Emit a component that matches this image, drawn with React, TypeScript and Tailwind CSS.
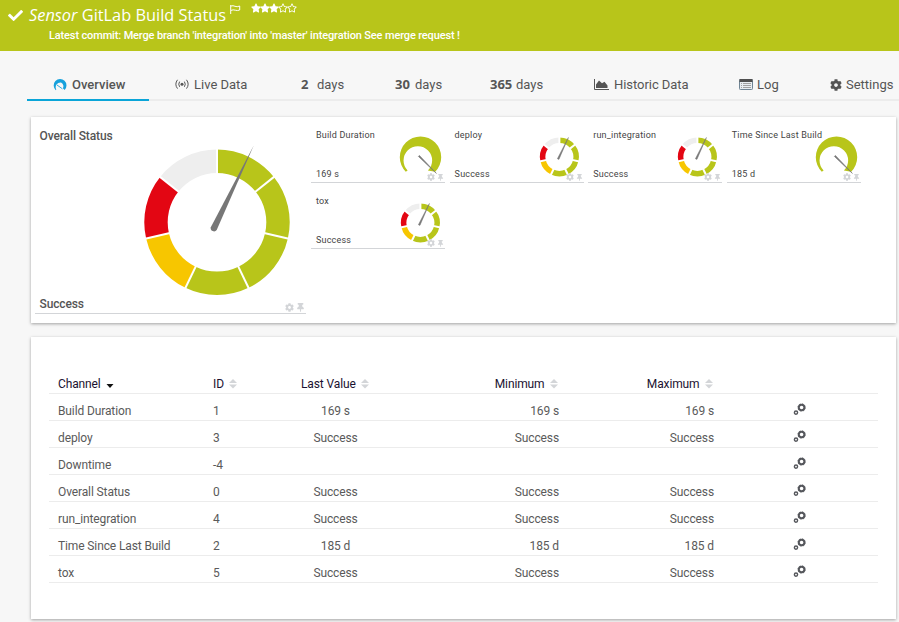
import React from 'react';
import clsx from 'clsx';
import { FaCheck, FaCog, FaRegStar, FaStar, FaThumbtack } from 'react-icons/fa';

type Channel = {
  name: string;
  id: string;
  last: string;
  min: string;
  max: string;
};

const channels: Channel[] = [
  { name: 'Build Duration', id: '1', last: '169 s', min: '169 s', max: '169 s' },
  { name: 'deploy', id: '3', last: 'Success', min: 'Success', max: 'Success' },
  { name: 'Downtime', id: '-4', last: '', min: '', max: '' },
  { name: 'Overall Status', id: '0', last: 'Success', min: 'Success', max: 'Success' },
  { name: 'run_integration', id: '4', last: 'Success', min: 'Success', max: 'Success' },
  { name: 'Time Since Last Build', id: '2', last: '185 d', min: '185 d', max: '185 d' },
  { name: 'tox', id: '5', last: 'Success', min: 'Success', max: 'Success' },
];

const gauges = [
  { name: 'Build Duration', value: '169 s', kind: 'dial' },
  { name: 'deploy', value: 'Success', kind: 'ring' },
  { name: 'run_integration', value: 'Success', kind: 'ring' },
  { name: 'Time Since Last Build', value: '185 d', kind: 'dial' },
  { name: 'tox', value: 'Success', kind: 'ring' },
];

const GREEN = '#b8c51a';
const SEGMENTS = [GREEN, GREEN, GREEN, GREEN, '#f7c600', '#e30613', '#eeeeee'];

const point = (r: number, deg: number) => {
  const a = ((deg - 90) * Math.PI) / 180;
  return `${(r * Math.cos(a)).toFixed(2)} ${(r * Math.sin(a)).toFixed(2)}`;
};

const Ring = ({ outer, inner, gap }: { outer: number; inner: number; gap: number }) => {
  const step = 360 / SEGMENTS.length;
  return (
    <g>
      {SEGMENTS.map((color, i) => {
        const a = i * step;
        const b = a + step;
        return (
          <path
            key={i}
            fill={color}
            d={`M${point(outer, a)}A${outer} ${outer} 0 0 1 ${point(outer, b)}L${point(inner, b)}A${inner} ${inner} 0 0 0 ${point(inner, a)}Z`}
          />
        );
      })}
      {SEGMENTS.map((_, i) => (
        <path key={i} d={`M${point(inner - 1, i * step)}L${point(outer + 1, i * step)}`} stroke="#fff" strokeWidth={gap} />
      ))}
    </g>
  );
};

const BigGauge = () => (
  <svg width="150" height="156" viewBox="-75 -80.3 150 156">
    <Ring outer={72.7} inner={49.3} gap={2} />
    <path d="M36.6 -76.6L-0.3 7.7A3.3 3.3 0 0 1 -6.2 5Z" fill="#777" />
  </svg>
);

const SmallRing = () => (
  <svg width="44" height="44" viewBox="-21.4 -22 44 44">
    <Ring outer={19.5} inner={14} gap={2} />
    <path d="M9 -19.5L-0.5 2.4L-2 1.7Z" fill="#777" stroke="#777" strokeWidth="0.5" />
  </svg>
);

const SmallDial = () => (
  <svg width="44" height="44" viewBox="-21.6 -22.2 44 44">
    <path d="M-14.8 14.6A20.7 20.7 0 1 1 14.6 14.6L7.3 13.4A14.3 14.3 0 1 0 -13 13.2Z" fill={GREEN} />
    <path d="M15.8 16.2L-2.2 -0.8L-1.2 -1.8Z" fill="#777" stroke="#777" strokeWidth="0.6" />
  </svg>
);

const Tools = ({ big }: { big?: boolean }) => (
  <div className="flex items-center gap-[2px] text-[#d3d5d8]">
    <FaCog size={big ? 9 : 8} />
    <FaThumbtack size={big ? 9 : 7} />
  </div>
);

const Sort = () => (
  <svg width="8" height="10" viewBox="0 0 8 10" className="ml-[5px] shrink-0">
    <path d="M4 0L8 4H0Z M0 5.5H8L4 9.5Z" fill="#d3d5d8" />
  </svg>
);

const Gears = () => (
  <svg width="14" height="13" viewBox="0 0 14 13" fill="none" stroke="#55575c">
    <circle cx="8.6" cy="4.5" r="2.8" strokeWidth="2" />
    <circle cx="8.6" cy="4.5" r="3.7" strokeWidth="0.8" strokeDasharray="1.4 1.5" />
    <circle cx="3" cy="9.6" r="1.6" strokeWidth="1.4" />
  </svg>
);

const GaugeIcon = () => (
  <svg width="14" height="12" viewBox="0 0 14 12">
    <path d="M2.8 11.2A6.4 6.4 0 1 1 11.6 11L9.9 9.2A4.2 4.2 0 0 0 8 3.4A4.9 4.9 0 0 0 3.3 10.6Z" fill="#16a1dc" />
    <path d="M4 6L9.4 9.8" stroke="#16a1dc" strokeWidth="0.9" />
  </svg>
);

const LiveIcon = () => (
  <svg width="14" height="11" viewBox="0 0 14 11" fill="none" stroke="#555" strokeWidth="1">
    <circle cx="7" cy="5.2" r="1.5" fill="#555" stroke="none" />
    <path d="M4.6 2.6Q2.9 5.2 4.6 7.8M9.4 2.6Q11.1 5.2 9.4 7.8M2.5 0.8Q-0.8 5.2 2.5 9.6M11.5 0.8Q14.8 5.2 11.5 9.6" />
  </svg>
);

const ChartIcon = () => (
  <svg width="15" height="11" viewBox="0 0 15 11">
    <path d="M0.5 0V10.5H15" fill="none" stroke="#555" />
    <path d="M2 9V5.5L5 1.5L8 4.3L10.5 2.7L13.5 6.5V9Z" fill="#555" />
  </svg>
);

const LogIcon = () => (
  <svg width="14" height="11" viewBox="0 0 14 11">
    <rect x="0.5" y="0.5" width="13" height="10" rx="0.8" fill="#e8edf1" stroke="#6f8494" />
    <path d="M0.5 0H13.5V3H0.5Z" fill="#505050" />
    <path d="M2 4.5H3M4 4.5H12M2 6.5H3M4 6.5H12M2 8.5H3M4 8.5H12" stroke="#999" strokeWidth="0.9" />
  </svg>
);

const Header = () => (
  <header className="h-[51px] bg-[#b8c51a] text-white">
    <div className="flex h-[29px] items-start pl-[8px]">
      <FaCheck className="mt-[8px]" size={15} />
      <h1 className="ml-[6px] mt-[4px] font-['Open_Sans'] text-[16.35px] leading-[22px] whitespace-nowrap">
        <em>Sensor</em> GitLab Build Status
      </h1>
      <svg className="ml-[4px] mt-[5px]" width="11" height="9" viewBox="0 0 11 9" fill="none" stroke="#fff" strokeWidth="1">
        <path d="M0.7 0V9M1 1Q3 0.3 5 1.3T9.7 1V5Q7.5 6 5.3 5.2T1 5.4" />
      </svg>
      <div className="ml-[10px] mt-[3px] flex">
        {[0, 1, 2, 3, 4].map((i) => (
          <span key={i} className="w-[9px]">
            {i < 3 ? <FaStar size={10} /> : <FaRegStar size={10} />}
          </span>
        ))}
      </div>
    </div>
    <p className="pl-[49px] text-[11px] leading-[14px] font-medium tracking-[-0.14px] whitespace-nowrap">
      Latest commit: Merge branch 'integration' into 'master' integration See merge request !
    </p>
  </header>
);

const Tabs = () => (
  <nav className="ml-[27px] mt-[17px] flex h-[33px] border-b-2 border-[#ececec] text-[13px] leading-[33px] whitespace-nowrap text-[#555]">
    <a className="flex h-[33px] w-[122px] items-center border-b-2 border-[#0aa5d8] pt-[2px] pl-[26px] font-medium">
      <GaugeIcon />
      <span className="ml-[5px]">Overview</span>
    </a>
    <a className="flex w-[152px] items-center pt-[2px] pl-[26px]">
      <LiveIcon />
      <span className="ml-[5px]">Live Data</span>
    </a>
    <a className="flex w-[94px]">
      <b className="w-[16px] font-['Open_Sans']">2</b>days
    </a>
    <a className="flex w-[95px]">
      <b className="w-[20px] font-['Open_Sans']">30</b>days
    </a>
    <a className="flex w-[104px]">
      <b className="w-[26px] font-['Open_Sans']">365</b>days
    </a>
    <a className="flex w-[145px] items-center pt-[2px]">
      <ChartIcon />
      <span className="ml-[5px] tracking-[-0.05px]">Historic Data</span>
    </a>
    <a className="flex w-[91px] items-center pt-[2px]">
      <LogIcon />
      <span className="ml-[4px]">Log</span>
    </a>
    <a className="flex items-center pt-[2px]">
      <FaCog size={12} />
      <span className="ml-[4px]">Settings</span>
    </a>
  </nav>
);

const Overview = () => (
  <section className="ml-[31px] mt-[16px] flex h-[206px] w-[865px] bg-white pl-[4px] shadow-[0_1px_3px_rgba(0,0,0,0.35)]">
    <div className="relative mt-[10px] flex h-[187px] w-[271px] flex-col justify-between border-b border-[#d3d5d8] px-[4.5px] text-[12px] leading-[18px] font-medium tracking-[-0.12px] text-[#555]">
      <h2>Overall Status</h2>
      <p>Success</p>
      <div className="absolute top-[15px] left-[107px]">
        <BigGauge />
      </div>
      <div className="absolute right-[1px] bottom-[1px]">
        <Tools big />
      </div>
    </div>
    <div className="ml-[5px] grid h-fit grid-cols-[repeat(4,134px)] gap-x-[4.6px]">
      {gauges.map((g) => (
        <div
          key={g.name}
          className="relative flex h-[66px] flex-col justify-between border-b border-[#d3d5d8] pt-[12px] pb-[1px] pl-[5px] text-[9px] leading-[13px] tracking-[0.2px] text-[#444]"
        >
          <h3>{g.name}</h3>
          <p>{g.value}</p>
          <div className="absolute top-[18px] left-[88px]">{g.kind === 'dial' ? <SmallDial /> : <SmallRing />}</div>
          <div className="absolute right-[1px] bottom-[1px]">
            <Tools />
          </div>
        </div>
      ))}
    </div>
  </section>
);

const row = 'grid h-[27px] grid-cols-[155px_88px_69px_189px_155px_1fr] border-b border-[#ececec] pl-[9px]';

const ChannelTable = () => (
  <section className="ml-[31px] mt-[14px] h-[282px] w-[865px] bg-white pt-[30px] pl-[18px] shadow-[0_1px_3px_rgba(0,0,0,0.35)]">
    <div className="w-[829px] text-[12px] tracking-[-0.12px] text-[#5a5a5a]">
      <div className={clsx(row, 'items-center pt-[7px] text-[#1b1230]')}>
        <span className="flex items-center">
          Channel
          <svg width="8" height="4" viewBox="0 0 8 4" className="ml-[5px] mt-[5px]">
            <path d="M0.5 0H7.5L4 4Z" fill="#111" />
          </svg>
        </span>
        <span className="flex items-center">ID<Sort /></span>
        <span className="flex items-center whitespace-nowrap">Last Value<Sort /></span>
        <span className="flex items-center justify-end pr-[1.5px]">Minimum<Sort /></span>
        <span className="flex items-center justify-end pr-[1.5px]">Maximum<Sort /></span>
      </div>
      {channels.map((c) => (
        <div key={c.id} className={clsx(row, 'leading-[34px]')}>
          <span>{c.name}</span>
          <span>{c.id}</span>
          <span className="text-center">{c.last}</span>
          <span className="text-right">{c.min}</span>
          <span className="text-right">{c.max}</span>
          <span className="pt-[9px] pl-[79px]">
            <Gears />
          </span>
        </div>
      ))}
    </div>
  </section>
);

const App: React.FC = () => (
  <div className="h-[622px] w-[899px] overflow-hidden bg-[#f7f7f7] font-['Roboto',sans-serif]">
    <Header />
    <Tabs />
    <Overview />
    <ChannelTable />
  </div>
);

export default App;
